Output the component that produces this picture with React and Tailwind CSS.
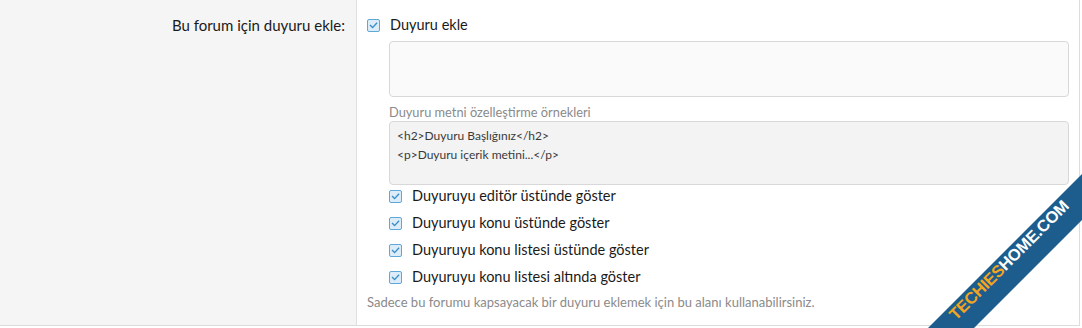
import React from 'react';

const Check = () => (
  <span className="flex h-[13px] w-[13px] shrink-0 items-center justify-center rounded-[2px] border border-[#5fa8d6] bg-[#dcedf9]">
    <svg width="9" height="9" viewBox="0 0 9 9" fill="none">
      <path d="M1.5 4.6 L3.6 6.6 L7.6 2.2" stroke="#3b8ec6" strokeWidth="1.4" strokeLinecap="square" />
    </svg>
  </span>
);

const options = [
  'Duyuruyu editör üstünde göster',
  'Duyuruyu konu üstünde göster',
  'Duyuruyu konu listesi üstünde göster',
  'Duyuruyu konu listesi altında göster',
];

const Ribbon = () => (
  <svg className="pointer-events-none absolute bottom-0 right-0" width="160" height="160" viewBox="0 0 160 160">
    <polygon points="6,160 52,160 160,52 160,6" fill="#1c5d8d" />
    <text
      x="0"
      y="0"
      transform="translate(34 153) rotate(-45)"
      fontFamily="'Liberation Sans', Arial, sans-serif"
      fontWeight="700"
      fontSize="16.5"
      letterSpacing="-0.2"
    >
      <tspan fill="#f4a51c">TECHIES</tspan>
      <tspan fill="#ffffff">HOME.COM</tspan>
    </text>
  </svg>
);

export default function App() {
  return (
    <div className="relative h-[328px] w-[1082px] overflow-hidden bg-white font-['Lato','Noto_Sans',sans-serif] text-[#1a1a1a]">
      <div className="flex h-[326px] w-[1080px] border-b border-r border-[#dcdcdc]">
        <div className="w-[357px] shrink-0 border-r border-[#e0e0e0] bg-[#f5f5f5] pr-[11px] pt-[15px] text-right text-[15px] leading-[20px]">
          Bu forum için duyuru ekle:
        </div>
        <div className="flex-1 pl-[10px] pr-[10px] pt-[15px]">
          <div className="flex items-center gap-[10px] text-[14.5px] leading-[20px]">
            <Check />
            <span>Duyuru ekle</span>
          </div>
          <div className="ml-[22px] mt-[6px]">
            <div className="h-[56px] rounded-[4px] border border-[#d8d8d8] bg-[#fafafa]" />
            <div className="mt-[7px] text-[12.8px] leading-[16px] text-[#8a8a8a]">Duyuru metni özelleştirme örnekleri</div>
            <div className="mt-[1px] h-[64px] rounded-[4px] border border-[#d8d8d8] bg-[#f3f3f4] px-[7px] pt-[4px] text-[12px] leading-[19px] text-[#3a3a3a]">
              <div>&lt;h2&gt;Duyuru Başlığınız&lt;/h2&gt;</div>
              <div>&lt;p&gt;Duyuru içerik metini...&lt;/p&gt;</div>
            </div>
            <div className="mt-[1px] flex flex-col gap-[7px]">
              {options.map((o) => (
                <div key={o} className="flex h-[20px] items-center gap-[10px] text-[14.5px]">
                  <Check />
                  <span>{o}</span>
                </div>
              ))}
            </div>
          </div>
          <div className="mt-[7px] text-[13px] leading-[16px] text-[#8a8a8a]">
            Sadece bu forumu kapsayacak bir duyuru eklemek için bu alanı kullanabilirsiniz.
          </div>
        </div>
      </div>
      <Ribbon />
    </div>
  );
}
